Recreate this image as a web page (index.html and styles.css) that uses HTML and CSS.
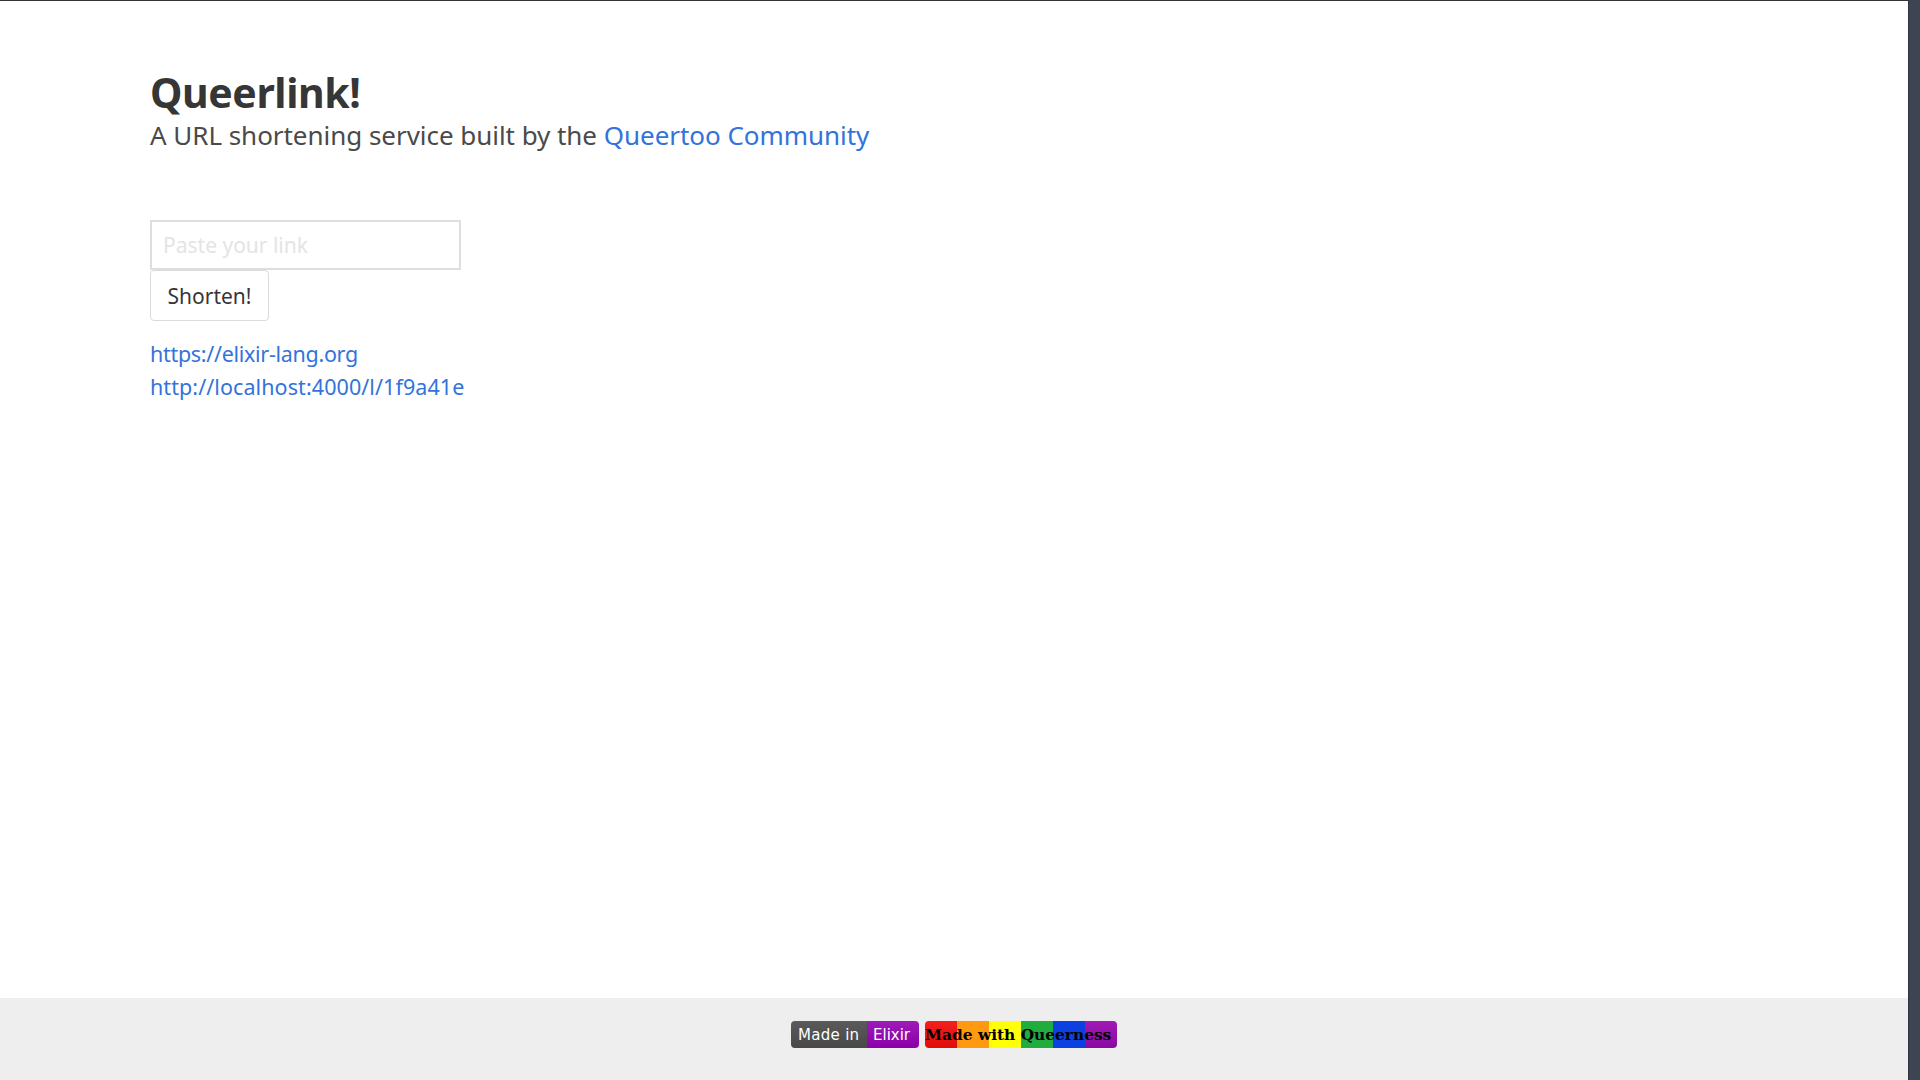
FILE: index.html
```html
<!DOCTYPE html>
<html lang="en">
<head>
<meta charset="utf-8">
<title>Queerlink!</title>
<link rel="stylesheet" href="styles.css">
</head>
<body>
<div class="app">
  <div class="page">
    <main class="content">
      <h1 class="title">Queerlink!</h1>
      <p class="subtitle">A URL shortening service built by the <a href="#">Queertoo Community</a></p>
      <form class="form">
        <input class="field" type="text" placeholder="Paste your link">
        <button class="btn" type="button">Shorten!</button>
      </form>
      <div class="links">
        <a class="link-long" href="#">https://elixir-lang.org</a>
        <a class="link-short" href="#">http://localhost:4000/l/1f9a41e</a>
      </div>
    </main>
    <footer class="footer">
      <span class="badge">
        <span class="seg seg-grey">Made in</span><span class="seg seg-purple">Elixir</span>
      </span>
      <span class="badge rainbow">
        <span class="stripes"><i class="s1"></i><i class="s2"></i><i class="s3"></i><i class="s4"></i><i class="s5"></i><i class="s6"></i></span>
        <span class="rainbow-text">Made with Queerness</span>
      </span>
    </footer>
  </div>
  <div class="scrollbar"></div>
</div>
</body>
</html>
```
FILE: styles.css
```css
* { box-sizing: border-box; }
html, body { margin: 0; height: 100%; overflow: hidden; }
body { font-family: "Noto Sans", sans-serif; color: #363636; background: #fff; }
a { color: #3273dc; text-decoration: none; }
.app { display: flex; height: 1080px; border-top: 1px solid #333; }
.page { flex: 1; display: flex; flex-direction: column; }
.scrollbar { width: 12px; background: #3f4452; border-left: 1px solid #2f333e; margin-top: -1px; }
.content { flex: 1; padding: 67px 150px 0; }
.title { margin: 0; font-size: 41px; line-height: 48px; font-weight: 700; letter-spacing: -0.4px; }
.subtitle { margin: 0; font-size: 26px; line-height: 38px; letter-spacing: -0.04px; color: #4a4a4a; }
.subtitle a { color: #3273dc; }
.form { margin-top: 66px; display: flex; flex-direction: column; align-items: flex-start; }
.field { width: 311px; height: 50px; padding: 0 11px; border: 2px solid #dedede; background: #fff; font: 21px "Noto Sans", sans-serif; outline: 0; }
.field::placeholder { color: #e4e4e4; opacity: 1; }
.btn { width: 119px; height: 51px; padding: 0; background: #fff; border: 1px solid #dbdbdb; border-radius: 4px; color: #363636; font: 21px "Noto Sans", sans-serif; }
.links { margin-top: 16px; display: flex; flex-direction: column; font-size: 21.5px; line-height: 33px; }
.link-long { letter-spacing: -0.3px; }
.link-short { letter-spacing: 0.08px; }
.footer { height: 82px; background: #eee; display: flex; justify-content: center; align-items: flex-start; gap: 6px; padding-top: 23px; }
.badge { position: relative; display: flex; height: 27px; border-radius: 4px; overflow: hidden; line-height: 27px; color: #fff; white-space: nowrap; }
.seg { padding: 1px 0 0 7px; font-family: "DejaVu Sans", sans-serif; font-size: 15px; line-height: 26px; }
.seg-grey { background: linear-gradient(#5a5a5a, #484848); width: 76px; letter-spacing: 0.3px; }
.seg-purple { background: linear-gradient(#9e1ab8, #8a00a8); width: 52px; padding-left: 6px; }
.rainbow { width: 192px; }
.stripes { display: flex; width: 100%; }
.stripes i { flex: 1; }
.s1 { background: linear-gradient(#f42020, #e00c0c); }
.s2 { background: #ff9a10; }
.s3 { background: #ffff0a; }
.s4 { background: #21ad3e; }
.s5 { background: #0c40e0; }
.s6 { background: linear-gradient(#a01ab4, #8a0aa0); }
.rainbow-text { position: absolute; left: 0; right: 0; top: 1px; white-space: nowrap; color: #000; font: 700 15.4px/27px "DejaVu Serif", serif; }
```
